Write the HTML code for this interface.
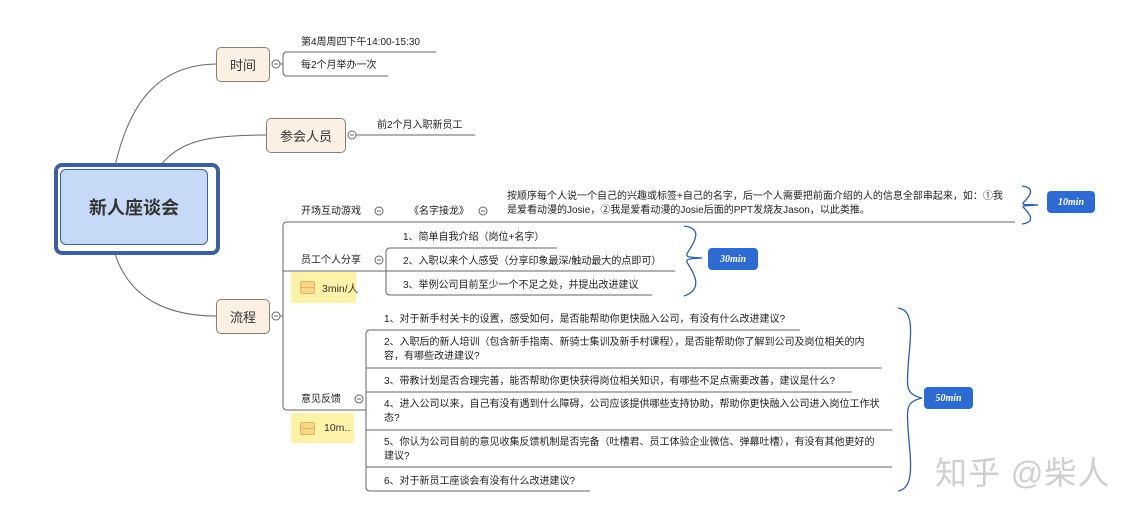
<!DOCTYPE html>
<html><head><meta charset="utf-8"><style>
body{margin:0;width:1144px;height:519px;background:#fff;position:relative;overflow:hidden;font-family:"Liberation Sans","Noto Sans CJK SC",sans-serif;color:#222}
.t{position:absolute;font-size:10px;line-height:14px;white-space:nowrap}
.n{position:absolute;background:#fcefe4;border:1px solid #8c7f72;border-radius:5px;font-size:13px;display:flex;align-items:center;justify-content:center;color:#333}
.y{position:absolute;background:#fcf3a8;font-size:10.5px;color:#333;white-space:nowrap}
.y i{position:absolute;left:9px;top:9px;width:13px;height:11px;border:1px solid #e0b85a;border-radius:2px;background:#f6d78a}
.y i:after{content:"";position:absolute;left:0;right:0;top:5px;border-top:1px solid #e0b85a}
.b{position:absolute;background:#2d6bd2;color:#fff;border-radius:4px;font-family:"Liberation Serif",serif;font-style:italic;font-weight:bold;font-size:10px;display:flex;align-items:center;justify-content:center}
</style></head><body>
<svg width="1144" height="519" style="position:absolute;left:0;top:0" fill="none" stroke="#666" stroke-width="1">
<path d="M115 166 C130 100,160 65,216 64"/>
<path d="M160 166 C180 140,210 135,266 135"/>
<path d="M115 254 C130 300,170 316,216 316"/>
<circle cx="276" cy="64" r="4"/><path d="M274 64h4"/>
<circle cx="352" cy="135" r="4"/><path d="M350 135h4"/>
<circle cx="276" cy="316" r="4"/><path d="M274 316h4"/>
<circle cx="379" cy="211" r="4"/><path d="M377 211h4"/>
<circle cx="483" cy="211" r="4"/><path d="M481 211h4"/>
<circle cx="379" cy="260" r="4"/><path d="M377 260h4"/>
<circle cx="359" cy="399" r="4"/><path d="M357 399h4"/>
<path d="M280 64h3"/>
<path d="M436 52H287q-4 0-4 4v16q0 4 4 4h101"/>
<path d="M356 135h119"/>
<path d="M280 316h3"/>
<path d="M1015 222H287q-4 0-4 4v180q0 4 4 4h79"/>
<path d="M283 271h103"/>
<path d="M557 248H390q-4 0-4 4v39q0 4 4 4h262"/>
<path d="M386 271h289"/>
<path d="M800 330H370q-4 0-4 4v153q0 4 4 4h220"/>
<path d="M366 368h516M366 392h486M366 430h526M366 467h526"/>
<g stroke="#2d5fae" stroke-width="1.3">
<path d="M1022 186c14 2,8 10,2 16c-4 4,4 2,14 3c-10 1,-18 0,-14 3c6 6,12 14,-2 16"/>
<path d="M684 226c18 2,12 14,4 26c-4 6,2 5,14 6c-12 1,-18 0,-14 6c8 12,14 26,-4 32"/>
<path d="M898 308c18 2,12 30,10 60c-1 20,-2 26,14 30c-16 4,-15 10,-14 30c2 30,8 60,-10 63"/>
</g>
</svg>
<div style="position:absolute;left:54px;top:163px;width:158px;height:84px;border:4px solid #3d5f9f;border-radius:8px"></div>
<div style="position:absolute;left:60px;top:169px;border:1px solid #3d5f9f;border-radius:6px;background:#c6d9f7;box-sizing:border-box;width:148px;height:76px;display:flex;align-items:center;justify-content:center;font-size:18px;font-weight:bold;color:#333">新人座谈会</div>
<div class="n" style="left:216px;top:47px;width:52px;height:33px">时间</div>
<div class="n" style="left:266px;top:118px;width:78px;height:33px">参会人员</div>
<div class="n" style="left:216px;top:299px;width:52px;height:33px">流程</div>
<div class="t" style="left:301px;top:36px">第4周周四下午14:00-15:30</div>
<div class="t" style="left:301px;top:59px">每2个月举办一次</div>
<div class="t" style="left:377px;top:119px">前2个月入职新员工</div>
<div class="t" style="left:301px;top:205px">开场互动游戏</div>
<div class="t" style="left:409px;top:205px">《名字接龙》</div>
<div class="t" style="left:507px;top:190px">按顺序每个人说一个自己的兴趣或标签+自己的名字，后一个人需要把前面介绍的人的信息全部串起来，如：①我<br>是爱看动漫的Josie，②我是爱看动漫的Josie后面的PPT发烧友Jason，以此类推。</div>
<div class="t" style="left:301px;top:254px">员工个人分享</div>
<div class="t" style="left:403px;top:231px">1、简单自我介绍（岗位+名字）</div>
<div class="t" style="left:403px;top:255px">2、入职以来个人感受（分享印象最深/触动最大的点即可）</div>
<div class="t" style="left:403px;top:279px">3、举例公司目前至少一个不足之处，并提出改进建议</div>
<div class="y" style="left:291px;top:272px;width:65px;height:31px"><i></i><span style="position:absolute;left:31px;top:9px">3min/人</span></div>
<div class="t" style="left:301px;top:393px">意见反馈</div>
<div class="y" style="left:291px;top:413px;width:63px;height:30px"><i></i><span style="position:absolute;left:33px;top:9px">10m..</span></div>
<div class="t" style="left:384px;top:313px">1、对于新手村关卡的设置，感受如何，是否能帮助你更快融入公司，有没有什么改进建议?</div>
<div class="t" style="left:384px;top:336px">2、入职后的新人培训（包含新手指南、新骑士集训及新手村课程），是否能帮助你了解到公司及岗位相关的内<br>容，有哪些改进建议?</div>
<div class="t" style="left:384px;top:375px">3、带教计划是否合理完善，能否帮助你更快获得岗位相关知识，有哪些不足点需要改善，建议是什么?</div>
<div class="t" style="left:384px;top:398px">4、进入公司以来，自己有没有遇到什么障碍，公司应该提供哪些支持协助，帮助你更快融入公司进入岗位工作状<br>态?</div>
<div class="t" style="left:384px;top:436px">5、你认为公司目前的意见收集反馈机制是否完备（吐槽君、员工体验企业微信、弹幕吐槽），有没有其他更好的<br>建议?</div>
<div class="t" style="left:384px;top:475px">6、对于新员工座谈会有没有什么改进建议?</div>
<div class="b" style="left:1047px;top:191px;width:48px;height:22px">10min</div>
<div class="b" style="left:708px;top:248px;width:50px;height:22px">30min</div>
<div class="b" style="left:924px;top:387px;width:49px;height:22px">50min</div>
<div style="position:absolute;left:935px;top:448px;font-size:32px;color:#cfcfcf;white-space:nowrap;letter-spacing:1px">知乎 @柴人</div>
</body></html>
